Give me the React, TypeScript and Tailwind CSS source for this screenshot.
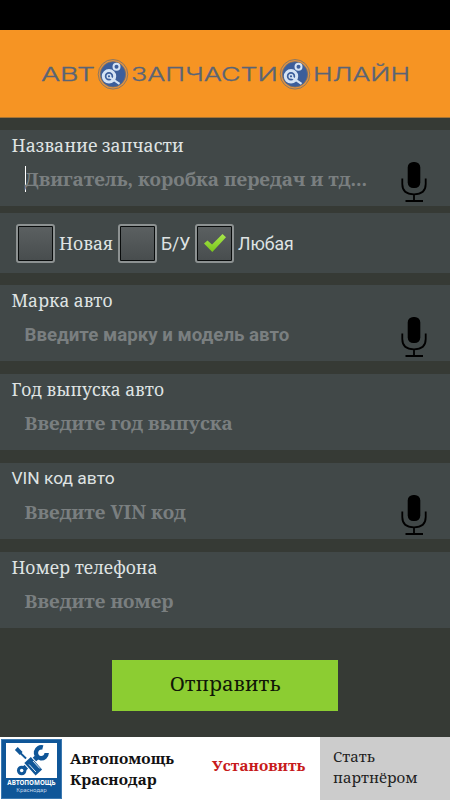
import React from "react";

const serif = "font-['Noto_Serif','DejaVu_Serif_Condensed','DejaVu_Serif',serif]";
const sans = "font-[Roboto,sans-serif]";

function Mic() {
  return (
    <svg width="26" height="42" viewBox="0 0 26 42" className="shrink-0">
      <rect x="6.7" y="1" width="12.6" height="26" rx="5.5" fill="#000" />
      <path d="M1.3 17.5V23C1.3 30 6 33.3 13 33.3S24.7 30 24.7 23V17.5M13 33.3V40" fill="none" stroke="#000" strokeWidth="1.8" />
      <path d="M4.5 40H22" stroke="#000" strokeWidth="2" />
    </svg>
  );
}

type FieldProps = {
  label: string;
  labelClass: string;
  hint: string;
  hintClass: string;
  mic?: boolean;
  cursor?: boolean;
};

function Field({ label, labelClass, hint, hintClass, mic, cursor }: FieldProps) {
  return (
    <section className="flex h-[76px] justify-between bg-[#414848] pr-[23px] pl-[11.5px]">
      <div className="flex flex-col pt-[3px] whitespace-nowrap">
        <label className={`h-6 leading-6 text-[#dfe3e3] ${labelClass}`}>{label}</label>
        <div className="mt-[9px] ml-[13px] flex h-[26px] items-center">
          {cursor && <span className="-mr-px h-[26px] w-px bg-white" />}
          <span className={`leading-6 font-bold text-[#7a7f80] ${hintClass}`}>{hint}</span>
        </div>
      </div>
      {mic && (
        <div className="pt-[31px]">
          <Mic />
        </div>
      )}
    </section>
  );
}

function Box({ checked }: { checked?: boolean }) {
  return (
    <span className="flex size-[39px] shrink-0 items-center justify-center rounded-[3px] border-2 border-[#8d9292] bg-[#090c0c] p-px">
      <span className="flex size-full items-center justify-center bg-linear-to-b from-[#5b6061] to-[#484d4e]">
        {checked && (
          <svg width="24" height="20" viewBox="0 0 24 20">
            <defs>
              <linearGradient id="tick" x1="0" y1="0" x2="0" y2="1">
                <stop offset="0" stopColor="#a9e84c" />
                <stop offset="1" stopColor="#79c51b" />
              </linearGradient>
            </defs>
            <path d="M1 10.5L4.5 7.5L9 11.5L19.5 1L23 4.2L9.3 19Z" fill="url(#tick)" />
          </svg>
        )}
      </span>
    </span>
  );
}

function Emblem({ x }: { x: number }) {
  return (
    <g transform={`translate(${x} 44.3)`}>
      <circle r="14.8" fill="#df9142" stroke="#8d7860" strokeWidth="1" />
      <circle r="12.6" fill="#3c5e9b" stroke="#706e70" strokeWidth=".8" />
      <circle cx="-4" cy="2" r="5.7" fill="none" stroke="#d5e3f4" strokeWidth="3" />
      <circle cx="-4" cy="2" r="1.8" fill="none" stroke="#d5e3f4" strokeWidth="1.4" />
      <path d="M-3 3L6.5 9.5" stroke="#d5e3f4" strokeWidth="2.2" />
      <circle cx="3.5" cy="-7.5" r="3" fill="none" stroke="#d5e3f4" strokeWidth="2" />
    </g>
  );
}

function Logo() {
  return (
    <svg width="450" height="88" viewBox="0 0 450 88">
      <g fill="#596476" stroke="#596476" strokeWidth=".3" fontFamily="Inter, sans-serif" fontSize="18" fontWeight="300">
        <text x="41" y="51" textLength="54" lengthAdjust="spacingAndGlyphs">АВТ</text>
        <text x="131" y="51" textLength="147" lengthAdjust="spacingAndGlyphs">ЗАПЧАСТИ</text>
        <text x="313" y="51" textLength="97" lengthAdjust="spacingAndGlyphs">НЛАЙН</text>
      </g>
      <Emblem x={113} />
      <Emblem x={295} />
    </svg>
  );
}

function HelpLogo() {
  return (
    <div className="mt-[2px] ml-[1px] flex h-[60px] w-[61px] shrink-0 flex-col items-center border border-[#3b78b0] bg-[#0f5698]">
      <svg width="51" height="35" viewBox="0 0 52 35" preserveAspectRatio="none" className="mt-[3px] shrink-0">
        <rect width="52" height="35" fill="#fff" />
        <path d="M17 27L33 13" stroke="#0f5698" strokeWidth="5" />
        <circle cx="16" cy="27.5" r="4.8" fill="#0f5698" />
        <circle cx="16" cy="27.5" r="1.8" fill="#fff" />
        <path d="M37.5 4.5A5.5 5.5 0 1 0 41.5 10" fill="none" stroke="#0f5698" strokeWidth="4.5" />
        <path d="M12 7.5L22 17" stroke="#0f5698" strokeWidth="1.8" />
        <path d="M10.5 5.5L15.5 10.5" stroke="#0f5698" strokeWidth="4" />
        <path d="M20.5 15.5L36 32" stroke="#fff" strokeWidth="11" />
        <path d="M22 17L33.5 29.5" stroke="#0f5698" strokeWidth="9" />
        <path d="M23.5 21.5L30.5 29M27.5 18L34.5 25.5" stroke="#fff" strokeWidth=".9" />
      </svg>
      <span className="mt-[1px] font-['Noto_Sans',sans-serif] text-[6.3px] leading-[8px] font-bold text-white">АВТОПОМОЩЬ</span>
      <span className="font-['Noto_Sans',sans-serif] text-[5.8px] leading-[7px] text-[#c5d9ec]">Краснодар</span>
    </div>
  );
}

const serifLabel = `text-[17.4px] ${serif}`;
const serifHint = `text-[18.9px] ${serif}`;

export default function App() {
  return (
    <main className="flex h-[800px] w-[450px] flex-col overflow-hidden bg-[#363a35]">
      <div className="h-[30px] shrink-0 bg-black" />
      <header className="h-[88px] shrink-0 border-b border-[#a57436] bg-[#f69423]">
        <Logo />
      </header>

      <div className="flex flex-col pt-3">
        <Field label="Название запчасти" labelClass={`text-[17.75px] ${serif}`} hint="Двигатель, коробка передач и тд..." hintClass={serifHint} mic cursor />
        <section className={`mt-[7px] mb-3 flex h-[60px] items-center bg-[#414848] pl-4 text-[17.6px] text-[#dfe3e3] ${serif}`}>
          <Box />
          <span className="w-[63px] pl-[4px]">Новая</span>
          <Box />
          <span className={`w-[38px] pt-[2px] pl-[4px] ${sans}`}>Б/У</span>
          <Box checked />
          <span className={`pt-[2px] pl-[4px] ${sans}`}>Любая</span>
        </section>
        <div className="flex flex-col gap-[13px]">
          <Field label="Марка авто" labelClass={serifLabel} hint="Введите марку и модель авто" hintClass={`pt-px text-[18.7px] ${sans}`} mic />
          <Field label="Год выпуска авто" labelClass={serifLabel} hint="Введите год выпуска" hintClass={serifHint} />
          <Field label="VIN код авто" labelClass={`text-[17.4px] ${sans}`} hint="Введите VIN код" hintClass={serifHint} mic />
          <Field label="Номер телефона" labelClass={serifLabel} hint="Введите номер" hintClass={serifHint} />
        </div>
      </div>

      <button className={`mt-8 ml-[112px] h-[51px] w-[226px] shrink-0 bg-[#8ccd32] pb-[4px] text-[20.4px] text-[#111807] ${serif}`}>Отправить</button>

      <footer className={`mt-auto flex h-[63px] shrink-0 bg-white whitespace-nowrap ${serif}`}>
        <HelpLogo />
        <div className="w-[150px] pt-[11px] pl-[8px] text-[15.3px] leading-[20.5px] font-bold tracking-[0.06px] text-[#111]">
          Автопомощь<br />Краснодар
        </div>
        <div className="w-[108px] pt-[17px] text-[15.3px] leading-[22px] font-bold tracking-[0.06px] text-[#c71a1b]">Установить</div>
        <div className="flex-1 bg-[#ccc] pt-[9px] pl-[13px] text-[15px] leading-[20.5px] text-[#222]">
          Стать<br />партнёром
        </div>
      </footer>
    </main>
  );
}
